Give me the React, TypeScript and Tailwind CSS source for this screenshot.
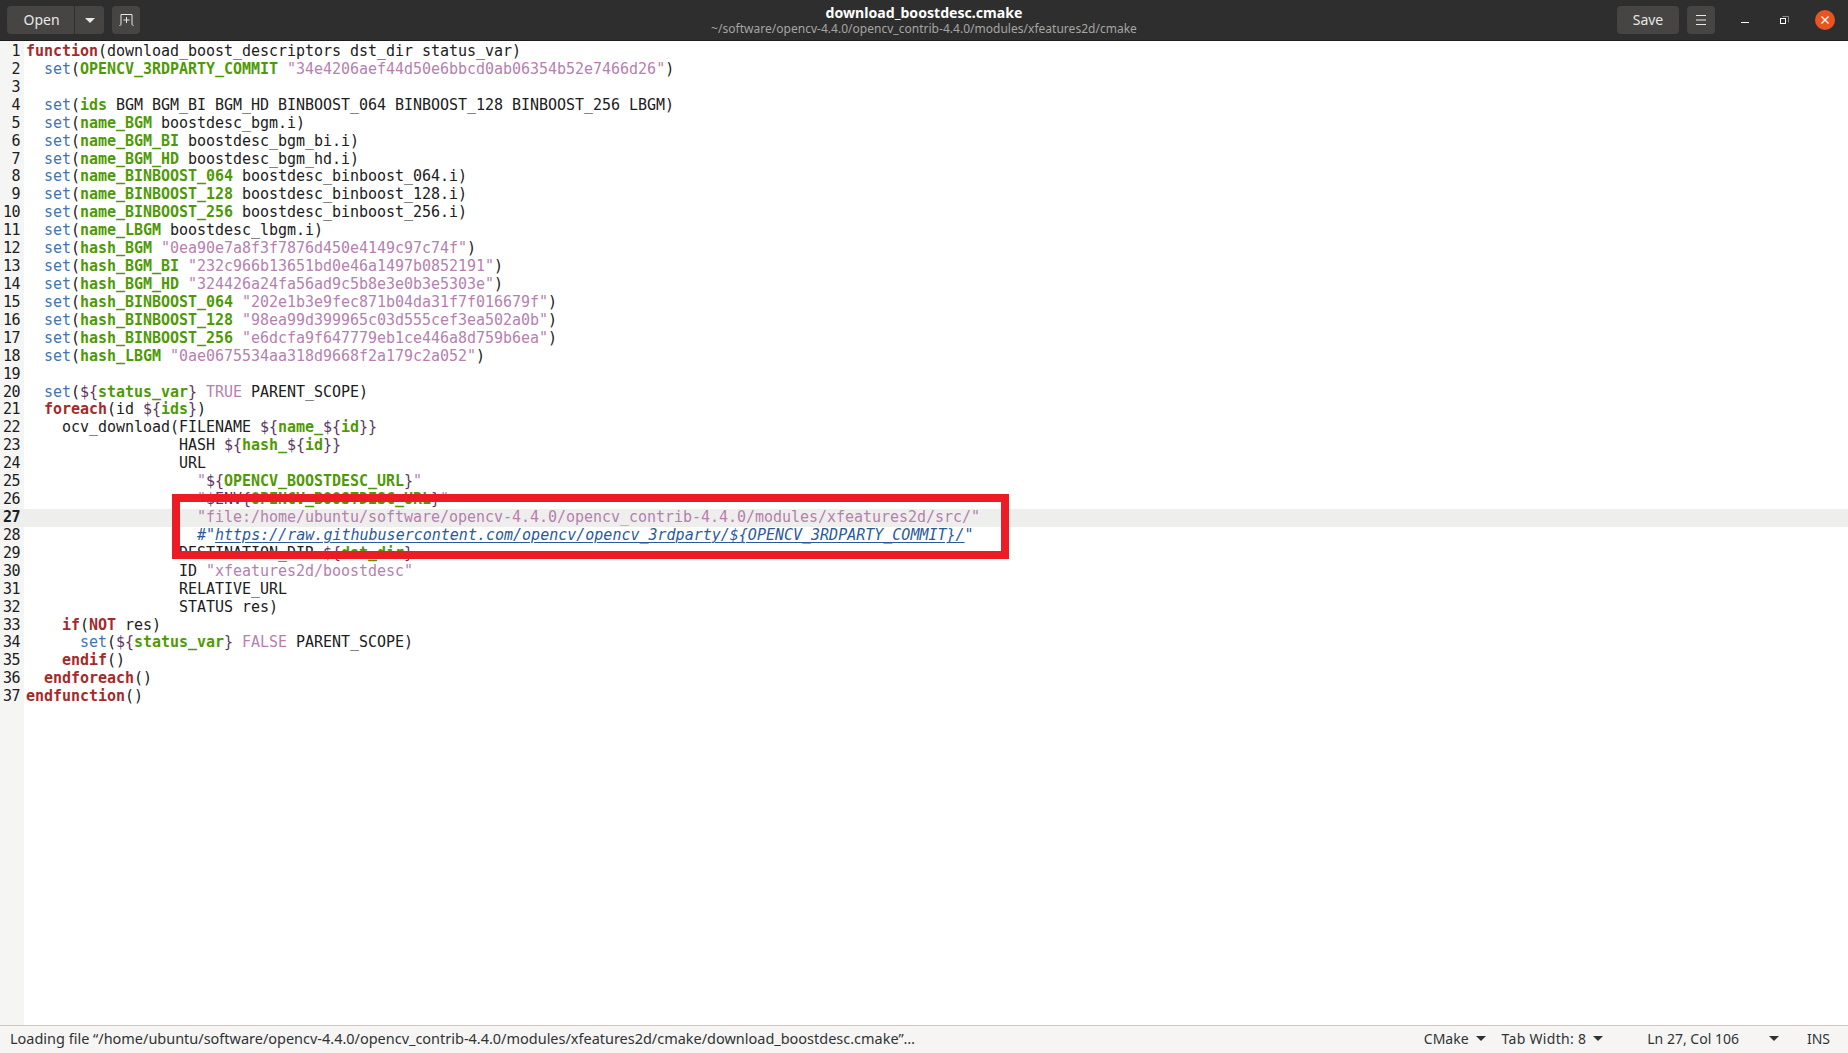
import { Fragment } from "react";

type Seg = [string, string];

const kinds: Record<string, string> = {
  t: "text-[#1c2021]",
  k: "text-[#a52a2a] font-bold",
  f: "text-[#3f74b5]",
  v: "text-[#4e9a06] font-bold",
  s: "text-[#b77fb0]",
  p: "text-[#5c3566]",
  c: "text-[#2a5a9c]",
  u: "text-[#2a5a9c] italic underline underline-offset-2 decoration-1 tracking-[0px]",
};

const setVar = (name: string, rest: Seg[]): Seg[] => [
  ["t", "  "],
  ["f", "set"],
  ["t", "("],
  ["v", name],
  ...rest,
];

const setName = (name: string, file: string) => setVar(name, [["t", ` ${file})`]]);
const setHash = (name: string, hash: string) =>
  setVar(name, [["t", " "], ["s", `"${hash}"`], ["t", ")"]]);

const lines: Seg[][] = [
  [["k", "function"], ["t", "(download_boost_descriptors dst_dir status_var)"]],
  setHash("OPENCV_3RDPARTY_COMMIT", "34e4206aef44d50e6bbcd0ab06354b52e7466d26"),
  [],
  setVar("ids", [["t", " BGM BGM_BI BGM_HD BINBOOST_064 BINBOOST_128 BINBOOST_256 LBGM)"]]),
  setName("name_BGM", "boostdesc_bgm.i"),
  setName("name_BGM_BI", "boostdesc_bgm_bi.i"),
  setName("name_BGM_HD", "boostdesc_bgm_hd.i"),
  setName("name_BINBOOST_064", "boostdesc_binboost_064.i"),
  setName("name_BINBOOST_128", "boostdesc_binboost_128.i"),
  setName("name_BINBOOST_256", "boostdesc_binboost_256.i"),
  setName("name_LBGM", "boostdesc_lbgm.i"),
  setHash("hash_BGM", "0ea90e7a8f3f7876d450e4149c97c74f"),
  setHash("hash_BGM_BI", "232c966b13651bd0e46a1497b0852191"),
  setHash("hash_BGM_HD", "324426a24fa56ad9c5b8e3e0b3e5303e"),
  setHash("hash_BINBOOST_064", "202e1b3e9fec871b04da31f7f016679f"),
  setHash("hash_BINBOOST_128", "98ea99d399965c03d555cef3ea502a0b"),
  setHash("hash_BINBOOST_256", "e6dcfa9f647779eb1ce446a8d759b6ea"),
  setHash("hash_LBGM", "0ae0675534aa318d9668f2a179c2a052"),
  [],
  [["t", "  "], ["f", "set"], ["t", "("], ["p", "${"], ["v", "status_var"], ["p", "}"], ["s", " TRUE"], ["t", " PARENT_SCOPE)"]],
  [["t", "  "], ["k", "foreach"], ["t", "(id "], ["p", "${"], ["v", "ids"], ["p", "}"], ["t", ")"]],
  [["t", "    ocv_download(FILENAME "], ["p", "${"], ["v", "name_"], ["p", "${"], ["v", "id"], ["p", "}}"]],
  [["t", "                 HASH "], ["p", "${"], ["v", "hash_"], ["p", "${"], ["v", "id"], ["p", "}}"]],
  [["t", "                 URL"]],
  [["s", "                   \""], ["p", "${"], ["v", "OPENCV_BOOSTDESC_URL"], ["p", "}"], ["s", "\""]],
  [["s", "                   \""], ["p", "$ENV{"], ["v", "OPENCV_BOOSTDESC_URL"], ["p", "}"], ["s", "\""]],
  [["s", "                   \"file:/home/ubuntu/software/opencv-4.4.0/opencv_contrib-4.4.0/modules/xfeatures2d/src/\""]],
  [["c", "                   #\""], ["u", "https://raw.githubusercontent.com/opencv/opencv_3rdparty/${OPENCV_3RDPARTY_COMMIT}/"], ["c", "\""]],
  [["t", "                 DESTINATION_DIR "], ["p", "${"], ["v", "dst_dir"], ["p", "}"]],
  [["t", "                 ID "], ["s", "\"xfeatures2d/boostdesc\""]],
  [["t", "                 RELATIVE_URL"]],
  [["t", "                 STATUS res)"]],
  [["t", "    "], ["k", "if"], ["t", "("], ["k", "NOT"], ["t", " res)"]],
  [["t", "      "], ["f", "set"], ["t", "("], ["p", "${"], ["v", "status_var"], ["p", "}"], ["s", " FALSE"], ["t", " PARENT_SCOPE)"]],
  [["t", "    "], ["k", "endif"], ["t", "()"]],
  [["t", "  "], ["k", "endforeach"], ["t", "()"]],
  [["k", "endfunction"], ["t", "()"]],
];

function Caret({ color }: { color: string }) {
  return (
    <svg width="10" height="5" viewBox="0 0 10 5" className={color}>
      <path d="M0 0h10L5 5z" fill="currentColor" />
    </svg>
  );
}

function Header() {
  return (
    <div className="h-[41px] shrink-0 bg-[#2f2e2e] border-b border-[#1e1d1d] flex items-center pl-[7px] pr-[13px] text-[#e8e8e6] font-['Noto_Sans',sans-serif]">
      <div className="flex-1 flex items-center">
        <div className="flex h-[28px] rounded-[4px] bg-[#464544]">
          <div className="w-[68px] pl-[2px] pb-[1px] flex items-center justify-center text-[14px] border-r border-[#302f2f]">Open</div>
          <div className="w-[29px] flex items-center justify-center">
            <Caret color="text-[#e8e8e6]" />
          </div>
        </div>
        <div className="ml-[8px] w-[28px] h-[28px] rounded-[4px] bg-[#464544] flex items-center justify-center">
          <svg width="15" height="12" viewBox="0 0 15 12" fill="none" stroke="#e8e8e6" strokeWidth="1">
            <path d="M.5 11.5c1 0 1.5-.5 1.5-1.5V.5h11V10c0 1 .5 1.5 1.5 1.5" />
            <path d="M4.5 6h6M7.5 3v6" />
          </svg>
        </div>
      </div>
      <div className="ml-[6px] flex flex-col items-center leading-none">
        <div className="text-[14.1px] font-bold text-white leading-[18px] mt-[-1px]">download_boostdesc.cmake</div>
        <div className="text-[12px] text-[#a5a5a3] leading-[14px] tracking-[0.02px]">~/software/opencv-4.4.0/opencv_contrib-4.4.0/modules/xfeatures2d/cmake</div>
      </div>
      <div className="flex-1 flex items-center justify-end">
        <div className="w-[62px] h-[28px] pb-[1px] rounded-[4px] bg-[#464544] flex items-center justify-center text-[14px]">Save</div>
        <div className="ml-[8px] w-[28px] h-[28px] rounded-[4px] bg-[#464544] flex items-center justify-center">
          <svg width="12" height="10" viewBox="0 0 12 10" stroke="#e8e8e6" strokeWidth="1">
            <path d="M1 .5h10M1 5h10M1 9.5h10" />
          </svg>
        </div>
        <div className="ml-[26px] w-[8px] h-[1px] mt-[5px] bg-white" />
        <svg className="ml-[31px]" width="9" height="9" viewBox="0 0 9 9" fill="none">
          <path d="M2.5 .5h6v6" stroke="#8a8a88" />
          <rect x=".5" y="2.5" width="5" height="5" stroke="#fff" />
        </svg>
        <div className="ml-[26px] w-[20px] h-[20px] rounded-full bg-[#e9541f] flex items-center justify-center">
          <svg width="8" height="8" viewBox="0 0 8 8" stroke="#fff" strokeWidth="1.3">
            <path d="M.5.5l7 7M7.5.5l-7 7" />
          </svg>
        </div>
      </div>
    </div>
  );
}

function Editor() {
  return (
    <div className="flex-1 relative bg-white overflow-hidden pt-[2px] font-['DejaVu_Sans_Mono',monospace] text-[15px]">
      <div className="absolute left-0 top-0 bottom-0 w-[24px] bg-[#f5f5f4]" />
      <div className="relative">
        {lines.map((segs, i) => {
          const current = i === 26;
          return (
            <div key={i} className={`flex h-[17.93px] leading-[17.93px] ${current ? "bg-[#eeeeec]" : ""}`}>
              <div className={`w-[20px] shrink-0 text-right text-[#1c2021] tracking-[-0.5px] ${current ? "font-bold" : ""}`}>{i + 1}</div>
              <div className="ml-[6px] whitespace-pre tracking-[-0.03px]">
                {segs.map((seg, j) => (
                  <Fragment key={j}>
                    <span className={kinds[seg[0]]}>{seg[1]}</span>
                  </Fragment>
                ))}
              </div>
            </div>
          );
        })}
      </div>
      {/* annotation box from the screenshot */}
      <div className="absolute left-[172px] top-[453px] w-[837px] h-[65px] border-[8px] border-[#ed1c24]" />
    </div>
  );
}

function StatusBar() {
  return (
    <div className="h-[28px] shrink-0 bg-[#f6f5f4] border-t border-[#cdc7c2] flex items-center text-[14px] text-[#2e3436] font-['Noto_Sans',sans-serif] pl-[10px] pr-[18px] pb-[2px]">
      <div className="flex-1 text-[14.47px] text-[#2e3436]">Loading file “/home/ubuntu/software/opencv-4.4.0/opencv_contrib-4.4.0/modules/xfeatures2d/cmake/download_boostdesc.cmake”…</div>
      <span>CMake</span>
      <span className="ml-[7px]"><Caret color="text-[#2e3436]" /></span>
      <span className="ml-[16px] tracking-[0.3px]">Tab Width: 8</span>
      <span className="ml-[7px]"><Caret color="text-[#2e3436]" /></span>
      <span className="ml-[44px]">Ln 27, Col 106</span>
      <span className="ml-[30px]"><Caret color="text-[#2e3436]" /></span>
      <span className="ml-[28px]">INS</span>
    </div>
  );
}

export default function App() {
  return (
    <div className="w-[1848px] h-[1053px] flex flex-col overflow-hidden">
      <Header />
      <Editor />
      <StatusBar />
    </div>
  );
}
